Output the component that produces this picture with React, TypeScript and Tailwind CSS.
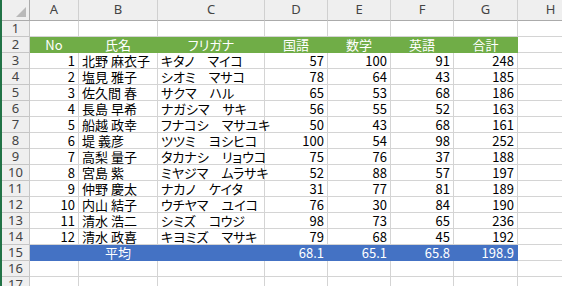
import React from 'react'

type Row = [number, string, string, number, number, number, number]

const rows: Row[] = [
  [1, '北野 麻衣子', 'キタノ　マイコ', 57, 100, 91, 248],
  [2, '塩見 雅子', 'シオミ　マサコ', 78, 64, 43, 185],
  [3, '佐久間 春', 'サクマ　ハル', 65, 53, 68, 186],
  [4, '長島 早希', 'ナガシマ　サキ', 56, 55, 52, 163],
  [5, '船越 政幸', 'フナコシ　マサユキ', 50, 43, 68, 161],
  [6, '堤 義彦', 'ツツミ　ヨシヒコ', 100, 54, 98, 252],
  [7, '高梨 量子', 'タカナシ　リョウコ', 75, 76, 37, 188],
  [8, '宮島 紫', 'ミヤジマ　ムラサキ', 52, 88, 57, 197],
  [9, '仲野 慶太', 'ナカノ　ケイタ', 31, 77, 81, 189],
  [10, '内山 結子', 'ウチヤマ　ユイコ', 76, 30, 84, 190],
  [11, '清水 浩二', 'シミズ　コウジ', 98, 73, 65, 236],
  [12, '清水 政喜', 'キヨミズ　マサキ', 79, 68, 45, 192],
]

const cellFont = "font-['Noto_Sans_CJK_JP',sans-serif] text-[13px] leading-[15px] [font-feature-settings:'palt']"

function Cell({ children, align = 'left', className = '' }: { children?: React.ReactNode; align?: 'left' | 'right' | 'center'; className?: string }) {
  const justify = align === 'right' ? 'justify-end' : align === 'center' ? 'justify-center' : 'justify-start'
  return (
    <div className={`flex items-center overflow-visible whitespace-nowrap border-r border-b px-[3px] ${justify} ${cellFont} ${className || 'border-[#d4d4d4] text-black'}`}>
      {children}
    </div>
  )
}

function RowHead({ n }: { n: number }) {
  return (
    <div className="flex items-center justify-center border-r border-b border-[#c6c6c6] bg-[#efefef] font-['Noto_Sans',sans-serif] text-[13px] leading-none text-[#444]">
      {n}
    </div>
  )
}

export default function App() {
  const fill = (bg: string) => `${bg} text-white`
  return (
    <div className="flex h-[286px] w-[562px] overflow-hidden bg-white">
      <div className="w-[2px] shrink-0 bg-[#217346]" />
      <div className="grid shrink-0 grid-cols-[28px_49px_79px_107px_63px_63px_63px_64px_66px] grid-rows-[21px] auto-rows-[16px]">
        {/* column headers */}
        <div className="relative border-r border-b border-[#ababab] bg-[#efefef]">
          <svg className="absolute right-[3px] bottom-[3px]" width="10" height="10" viewBox="0 0 10 10">
            <path d="M10 0 L10 10 L0 10 Z" fill="#b9b9b9" />
          </svg>
        </div>
        {['A', 'B', 'C', 'D', 'E', 'F', 'G', 'H'].map((c) => (
          <div
            key={c}
            className="flex items-center justify-center border-r border-b border-r-[#d0d0d0] border-b-[#ababab] bg-[#efefef] font-['Noto_Sans',sans-serif] text-[13px] text-[#444]"
          >
            {c}
          </div>
        ))}

        {/* row 1 */}
        <RowHead n={1} />
        {Array.from({ length: 8 }).map((_, i) => (
          <Cell key={i} />
        ))}

        {/* row 2: header band */}
        <RowHead n={2} />
        <Cell align="center" className={fill('bg-[#70ad47] border-[#70ad47]')}>No</Cell>
        <Cell align="center" className={fill('bg-[#70ad47] border-[#70ad47]')}>氏名</Cell>
        <Cell align="center" className={fill('bg-[#70ad47] border-[#70ad47]')}>フリガナ</Cell>
        <Cell align="center" className={fill('bg-[#70ad47] border-[#70ad47]')}>国語</Cell>
        <Cell align="center" className={fill('bg-[#70ad47] border-[#70ad47]')}>数学</Cell>
        <Cell align="center" className={fill('bg-[#70ad47] border-[#70ad47]')}>英語</Cell>
        <Cell align="center" className={fill('bg-[#70ad47] border-[#70ad47]')}>合計</Cell>
        <Cell />

        {/* data rows */}
        {rows.map((r, i) => (
          <React.Fragment key={r[0]}>
            <RowHead n={i + 3} />
            <Cell align="right">{r[0]}</Cell>
            <Cell>{r[1]}</Cell>
            <Cell>{r[2]}</Cell>
            <Cell align="right">{r[3]}</Cell>
            <Cell align="right">{r[4]}</Cell>
            <Cell align="right">{r[5]}</Cell>
            <Cell align="right">{r[6]}</Cell>
            <Cell />
          </React.Fragment>
        ))}

        {/* row 15: averages */}
        <RowHead n={15} />
        <Cell className={fill('bg-[#4472c4] border-[#4472c4]')} />
        <Cell align="center" className={fill('bg-[#4472c4] border-[#4472c4]')}>平均</Cell>
        <Cell className={fill('bg-[#4472c4] border-[#4472c4]')} />
        <Cell align="right" className={fill('bg-[#4472c4] border-[#4472c4]')}>68.1</Cell>
        <Cell align="right" className={fill('bg-[#4472c4] border-[#4472c4]')}>65.1</Cell>
        <Cell align="right" className={fill('bg-[#4472c4] border-[#4472c4]')}>65.8</Cell>
        <Cell align="right" className={fill('bg-[#4472c4] border-[#4472c4]')}>198.9</Cell>
        <Cell />

        {/* rows 16-17 */}
        {[16, 17].map((n) => (
          <React.Fragment key={n}>
            <RowHead n={n} />
            {Array.from({ length: 8 }).map((_, i) => (
              <Cell key={i} />
            ))}
          </React.Fragment>
        ))}
      </div>
    </div>
  )
}
